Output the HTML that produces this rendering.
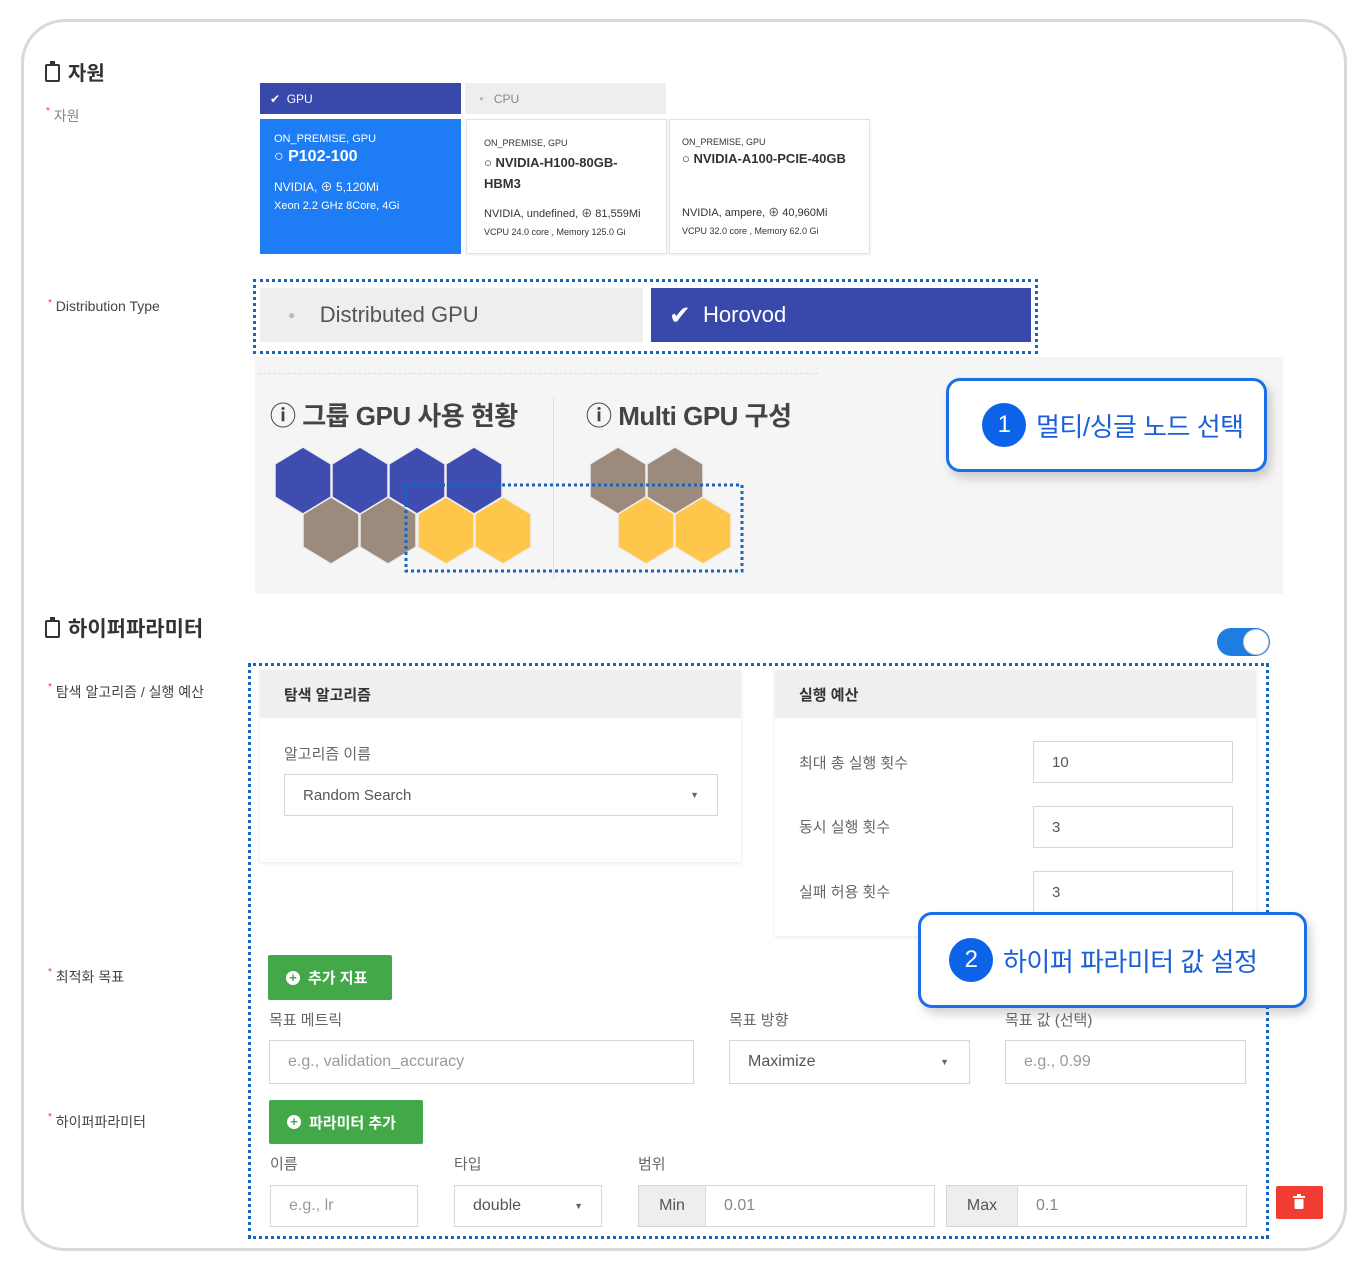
<!DOCTYPE html>
<html><head><meta charset="utf-8"><style>
*{box-sizing:border-box;margin:0;padding:0}
body{width:1365px;height:1272px;background:#fff;position:relative;overflow:hidden;font-family:"Liberation Sans","Noto Sans CJK KR",sans-serif;color:#333}
.a{position:absolute}
.frame{left:21px;top:19px;width:1326px;height:1232px;border:3px solid #d9d9d9;border-radius:44px}
.lbl{font-size:14px;color:#444}
.lbl b{color:#e53935;font-weight:normal;font-size:10px;vertical-align:top}
.card{background:#fff;border:1px solid #e2e2e2;box-shadow:0 1px 3px rgba(0,0,0,.08)}
.inp{background:#fff;border:1px solid #d6d6d6;font-size:16px;color:#555;padding-left:18px;display:flex;align-items:center}
.dash{border:3px dotted #1565c0}
.btn{background:#43a848;color:#fff;font-size:15px;font-weight:bold;display:flex;align-items:center;padding-left:18px;gap:8px;border-radius:2px}
.pl{width:14px;height:14px;border-radius:50%;background:#fff;color:#43a848;font-size:13px;line-height:14px;text-align:center}
.call{background:#fff;border:3px solid #1a6ee8;border-radius:14px;box-shadow:4px 6px 10px rgba(0,0,0,.18);display:flex;align-items:center;color:#1a5fd8;font-size:26px;letter-spacing:-0.5px}
.num{width:44px;height:44px;border-radius:50%;background:#0d63e8;color:#fff;font-size:24px;display:flex;align-items:center;justify-content:center;margin-right:10px}
.clip{display:inline-block;width:15px;height:18px;border:2.5px solid #333;border-radius:2px;position:relative;vertical-align:-2px;margin-right:8px}
.clip:after{content:"";position:absolute;left:3px;top:-5px;width:5px;height:4px;background:#333}
</style></head><body>
<div class="a frame"></div>

<div class="a" style="left:45px;top:57px;font-size:20px;font-weight:bold;color:#333"><span class="clip"></span>자원</div>
<div class="a lbl" style="left:46px;top:106px;color:#888"><b>*</b> 자원</div>
<div class="a" style="left:260px;top:83px;width:201px;height:31px;background:#3949ab;color:#fff;font-size:12px;display:flex;align-items:center;padding-left:10px">✔&nbsp; GPU</div>
<div class="a" style="left:465px;top:83px;width:201px;height:31px;background:#eee;color:#888;font-size:12px;display:flex;align-items:center;padding-left:14px"><span style="font-size:8px;color:#bbb">●</span>&nbsp;&nbsp; CPU</div>
<div class="a" style="left:260px;top:119px;width:201px;height:135px;background:#1e7df5;color:#fff;padding:14px 14px">
<div style="font-size:11px">ON_PREMISE, GPU</div>
<div style="font-size:16px;font-weight:bold;margin-top:3px">○ P102-100</div>
<div style="font-size:12px;margin-top:12px">NVIDIA, ⊕ 5,120Mi</div>
<div style="font-size:11px;margin-top:5px">Xeon 2.2 GHz 8Core, 4Gi</div></div>
<div class="a card" style="left:466px;top:119px;width:201px;height:135px;padding:18px 17px;color:#333">
<div style="font-size:9px">ON_PREMISE, GPU</div>
<div style="font-size:13px;font-weight:bold;margin-top:4px;line-height:21px">○ NVIDIA-H100-80GB-<br>HBM3</div>
<div style="font-size:11px;margin-top:11px">NVIDIA, undefined, ⊕ 81,559Mi</div>
<div style="font-size:9px;margin-top:6px">VCPU 24.0 core , Memory 125.0 Gi</div></div>
<div class="a card" style="left:669px;top:119px;width:201px;height:135px;padding:17px 12px;color:#333">
<div style="font-size:9px">ON_PREMISE, GPU</div>
<div style="font-size:13px;font-weight:bold;margin-top:4px">○ NVIDIA-A100-PCIE-40GB</div>
<div style="font-size:11px;margin-top:38px">NVIDIA, ampere, ⊕ 40,960Mi</div>
<div style="font-size:9px;margin-top:6px">VCPU 32.0 core , Memory 62.0 Gi</div></div>

<div class="a lbl" style="left:48px;top:298px"><b>*</b> Distribution Type</div>
<div class="a dash" style="left:253px;top:279px;width:785px;height:75px"></div>
<div class="a" style="left:260px;top:288px;width:383px;height:54px;background:#eee;color:#555;font-size:22px;display:flex;align-items:center;padding-left:28px"><span style="font-size:12px;color:#bbb">●</span>&nbsp;&nbsp;&nbsp; Distributed GPU</div>
<div class="a" style="left:651px;top:288px;width:380px;height:54px;background:#3949ab;color:#fff;font-size:22px;display:flex;align-items:center;padding-left:18px"><span style="font-size:26px">✔</span>&nbsp; Horovod</div>

<div class="a" style="left:255px;top:357px;width:1028px;height:237px;background:#f5f5f5"></div>
<div class="a" style="left:258px;top:373px;width:560px;border-top:1px dashed #ddd"></div>
<div class="a" style="left:553px;top:398px;width:1px;height:180px;background:#ddd"></div>
<div class="a" style="left:270px;top:396px;font-size:26px;font-weight:bold;color:#444;letter-spacing:-0.5px">ⓘ 그룹 GPU 사용 현황</div>
<div class="a" style="left:586px;top:396px;font-size:26px;font-weight:bold;color:#444;letter-spacing:-0.5px">ⓘ Multi GPU 구성</div>
<svg class="a" style="left:0;top:0" width="1365" height="1272">
<g stroke="#eee" stroke-width="1.5">
<polygon fill="#9c8a7c" points="331,497 359,514 359,547 331,564 303,547 303,514"/>
<polygon fill="#9c8a7c" points="388,497 416,514 416,547 388,564 360,547 360,514"/>
<polygon fill="#3f4db1" points="303,447 331,464 331,497 303,514 275,497 275,464"/>
<polygon fill="#3f4db1" points="360,447 388,464 388,497 360,514 332,497 332,464"/>
<polygon fill="#3f4db1" points="417,447 445,464 445,497 417,514 389,497 389,464"/>
<polygon fill="#3f4db1" points="474,447 502,464 502,497 474,514 446,497 446,464"/>
<polygon fill="#fec64a" points="446,497 474,514 474,547 446,564 418,547 418,514"/>
<polygon fill="#fec64a" points="503,497 531,514 531,547 503,564 475,547 475,514"/>
<polygon fill="#9c8a7c" points="618,447 646,464 646,497 618,514 590,497 590,464"/>
<polygon fill="#9c8a7c" points="675,447 703,464 703,497 675,514 647,497 647,464"/>
<polygon fill="#fec64a" points="646,497 674,514 674,547 646,564 618,547 618,514"/>
<polygon fill="#fec64a" points="703,497 731,514 731,547 703,564 675,547 675,514"/>
</g>
<rect x="406" y="485" width="336" height="86" fill="none" stroke="#1565c0" stroke-width="3" stroke-dasharray="3,3"/>
</svg>
<div class="a call" style="left:946px;top:378px;width:321px;height:94px;padding-left:33px"><div class="num">1</div>멀티/싱글 노드 선택</div>

<div class="a" style="left:45px;top:613px;font-size:21px;font-weight:bold;color:#333"><span class="clip"></span>하이퍼파라미터</div>
<div class="a" style="left:1217px;top:628px;width:53px;height:28px;border-radius:14px;background:#1e7de0"></div>
<div class="a" style="left:1243px;top:629px;width:26px;height:26px;border-radius:50%;background:#fff;border:1px solid #ccc"></div>

<div class="a lbl" style="left:48px;top:682px"><b>*</b> 탐색 알고리즘 / 실행 예산</div>
<div class="a lbl" style="left:48px;top:967px"><b>*</b> 최적화 목표</div>
<div class="a lbl" style="left:48px;top:1112px"><b>*</b> 하이퍼파라미터</div>

<div class="a dash" style="left:248px;top:663px;width:1021px;height:576px"></div>

<div class="a card" style="left:260px;top:670px;width:481px;height:192px;border:none;box-shadow:0 1px 4px rgba(0,0,0,.1)"></div>
<div class="a" style="left:260px;top:670px;width:481px;height:48px;background:#efefef;font-size:15px;font-weight:bold;padding:14px 24px;color:#333">탐색 알고리즘</div>
<div class="a" style="left:284px;top:743px;font-size:15px;color:#666">알고리즘 이름</div>
<div class="a inp" style="left:284px;top:774px;width:434px;height:42px;font-size:15px">Random Search<span style="position:absolute;right:18px;font-size:9px;color:#666">▼</span></div>

<div class="a card" style="left:775px;top:670px;width:481px;height:266px;border:none;box-shadow:0 1px 4px rgba(0,0,0,.1)"></div>
<div class="a" style="left:775px;top:670px;width:481px;height:48px;background:#efefef;font-size:15px;font-weight:bold;padding:14px 24px;color:#333">실행 예산</div>
<div class="a" style="left:799px;top:752px;font-size:15px;color:#666">최대 총 실행 횟수</div>
<div class="a" style="left:799px;top:816px;font-size:15px;color:#666">동시 실행 횟수</div>
<div class="a" style="left:799px;top:881px;font-size:15px;color:#666">실패 허용 횟수</div>
<div class="a inp" style="left:1033px;top:741px;width:200px;height:42px;font-size:15px">10</div>
<div class="a inp" style="left:1033px;top:806px;width:200px;height:42px;font-size:15px">3</div>
<div class="a inp" style="left:1033px;top:871px;width:200px;height:42px;font-size:15px">3</div>

<div class="a call" style="left:918px;top:912px;width:389px;height:96px;padding-left:28px"><div class="num">2</div>하이퍼 파라미터 값 설정</div>

<div class="a btn" style="left:268px;top:955px;width:124px;height:45px"><span class="pl">+</span>추가 지표</div>
<div class="a" style="left:269px;top:1009px;font-size:15px;color:#666">목표 메트릭</div>
<div class="a" style="left:729px;top:1009px;font-size:15px;color:#666">목표 방향</div>
<div class="a" style="left:1005px;top:1009px;font-size:15px;color:#666">목표 값 (선택)</div>
<div class="a inp" style="left:269px;top:1040px;width:425px;height:44px;color:#9a9a9a">e.g., validation_accuracy</div>
<div class="a inp" style="left:729px;top:1040px;width:241px;height:44px">Maximize<span style="position:absolute;right:20px;font-size:9px;color:#666">▼</span></div>
<div class="a inp" style="left:1005px;top:1040px;width:241px;height:44px;color:#9a9a9a">e.g., 0.99</div>

<div class="a btn" style="left:269px;top:1100px;width:154px;height:44px"><span class="pl">+</span>파라미터 추가</div>
<div class="a" style="left:270px;top:1153px;font-size:15px;color:#666">이름</div>
<div class="a" style="left:454px;top:1153px;font-size:15px;color:#666">타입</div>
<div class="a" style="left:638px;top:1153px;font-size:15px;color:#666">범위</div>
<div class="a inp" style="left:270px;top:1185px;width:148px;height:42px;color:#9a9a9a">e.g., lr</div>
<div class="a inp" style="left:454px;top:1185px;width:148px;height:42px">double<span style="position:absolute;right:18px;font-size:9px;color:#666">▼</span></div>
<div class="a inp" style="left:638px;top:1185px;width:297px;height:42px;padding-left:0"><span style="background:#eee;height:100%;width:67px;display:flex;align-items:center;justify-content:center;border-right:1px solid #ddd">Min</span><span style="padding-left:18px;color:#888">0.01</span></div>
<div class="a inp" style="left:946px;top:1185px;width:301px;height:42px;padding-left:0"><span style="background:#eee;height:100%;width:71px;display:flex;align-items:center;justify-content:center;border-right:1px solid #ddd">Max</span><span style="padding-left:18px;color:#888">0.1</span></div>
<div class="a" style="left:1276px;top:1186px;width:47px;height:33px;background:#f13c32;border-radius:2px"></div>
<svg class="a" style="left:1292px;top:1194px" width="14" height="16"><rect x="1" y="2" width="12" height="2" fill="#fff"/><rect x="5" y="0" width="4" height="2" fill="#fff"/><rect x="2.5" y="5" width="9" height="10" rx="1" fill="#fff"/></svg>
</body></html>
